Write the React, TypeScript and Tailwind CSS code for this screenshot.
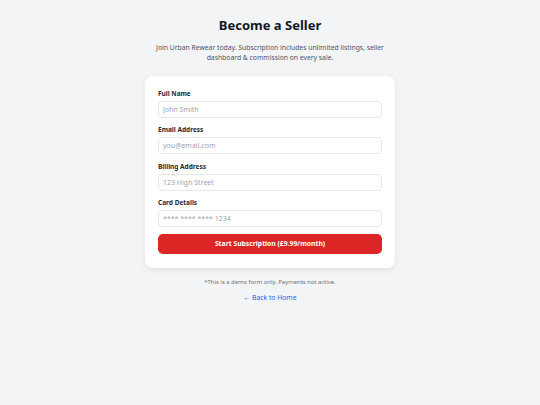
export default function App() {
  const fields = [
    { label: 'Full Name', placeholder: 'John Smith', type: 'text' },
    { label: 'Email Address', placeholder: 'you@email.com', type: 'email' },
    { label: 'Billing Address', placeholder: '123 High Street', type: 'text' },
    { label: 'Card Details', placeholder: '**** **** **** 1234', type: 'text' },
  ]

  return (
    <div className="min-h-screen bg-[#f3f4f6] font-['Noto_Sans',sans-serif] flex flex-col items-center pt-[16px]">
      <h1 className="text-[13px] leading-[18px] font-bold text-[#111827]">Become a Seller</h1>
      <p className="mt-[9px] w-[236px] text-center text-[6.8px] leading-[10px] text-[#4b5563]">
        Join Urban Rewear today. Subscription includes unlimited listings, seller dashboard &amp; commission on every sale.
      </p>

      <form
        className="mt-[13px] w-[250px] bg-white rounded-[8px] shadow-[0_2px_6px_rgba(0,0,0,0.08)] px-[13px] pt-[13px] pb-[14px] flex flex-col gap-[7.25px]"
        onSubmit={(e) => e.preventDefault()}
      >
        {fields.map((f) => (
          <div key={f.label} className="flex flex-col">
            <label className="text-[6.5px] leading-[10px] font-bold text-[#1f2937] mb-[2px]">{f.label}</label>
            <input
              type={f.type}
              placeholder={f.placeholder}
              className="h-[17px] w-full rounded-[4px] border border-[#e5e7eb] px-[4px] text-[7px] text-[#111827] placeholder:text-[#9ca3af] outline-none"
            />
          </div>
        ))}
        <button
          type="submit"
          className="h-[20px] w-full rounded-[5px] bg-[#dc2626] text-white text-[6.8px] font-bold"
        >
          Start Subscription (£9.99/month)
        </button>
      </form>

      <p className="mt-[9px] text-[5.9px] leading-[10px] text-[#6b7280]">*This is a demo form only. Payments not active.</p>
      <a href="#" className="mt-[6px] text-[6.8px] leading-[10px] text-[#2563eb]">← Back to Home</a>
    </div>
  )
}
